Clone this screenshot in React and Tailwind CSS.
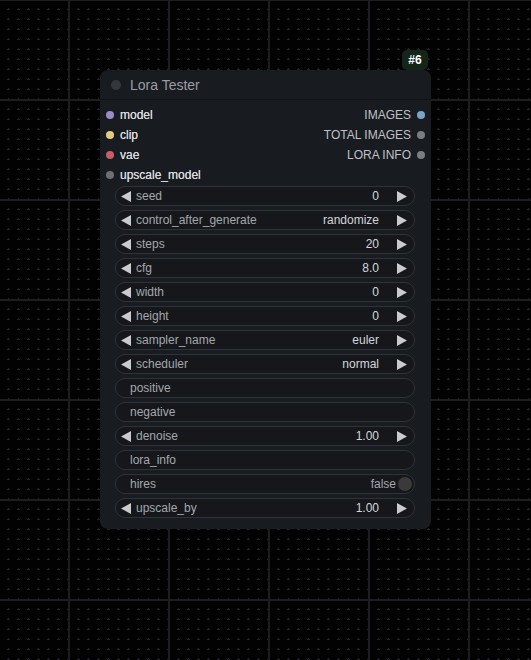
import React from "react";

const inputs = [
  { name: "model", color: "bg-[#9d8bc3]" },
  { name: "clip", color: "bg-[#e6cb7e]" },
  { name: "vae", color: "bg-[#c65e69]" },
  { name: "upscale_model", color: "bg-[#6c6e74]" },
];
const outputs = [
  { name: "IMAGES", color: "bg-[#7ea3c8]" },
  { name: "TOTAL IMAGES", color: "bg-[#7b7d83]" },
  { name: "LORA INFO", color: "bg-[#7b7d83]" },
];

const widgets = [
  { t: "num", label: "seed", value: "0" },
  { t: "num", label: "control_after_generate", value: "randomize" },
  { t: "num", label: "steps", value: "20" },
  { t: "num", label: "cfg", value: "8.0" },
  { t: "num", label: "width", value: "0" },
  { t: "num", label: "height", value: "0" },
  { t: "num", label: "sampler_name", value: "euler" },
  { t: "num", label: "scheduler", value: "normal" },
  { t: "text", label: "positive" },
  { t: "text", label: "negative" },
  { t: "num", label: "denoise", value: "1.00" },
  { t: "text", label: "lora_info" },
  { t: "toggle", label: "hires", value: "false" },
  { t: "num", label: "upscale_by", value: "1.00" },
];

function Background() {
  return (
    <svg className="absolute inset-0" width="531" height="660">
      <defs>
        <pattern id="dots" x="0" y="0" width="10" height="10" patternUnits="userSpaceOnUse">
          <rect x="7" y="9" width="3" height="1" fill="#212328" />
          <rect x="8" y="8" width="1" height="3" fill="#212328" />
        </pattern>
        <pattern id="grid" x="68" y="-1" width="100" height="100" patternUnits="userSpaceOnUse">
          <rect x="0" y="0" width="2" height="100" fill="#1c1e22" />
          <rect x="0" y="0" width="100" height="2" fill="#1c1e22" />
        </pattern>
      </defs>
      <rect width="531" height="660" fill="#020203" />
      <rect width="531" height="660" fill="url(#dots)" />
      <rect width="531" height="660" fill="url(#grid)" />
    </svg>
  );
}

function LeftArrow() {
  return (
    <svg width="10" height="11" viewBox="0 0 10 11" className="ml-[5px] mr-[5px] shrink-0">
      <polygon points="0,5.5 10,0 10,11" fill="#c9cbce" />
    </svg>
  );
}
function RightArrow() {
  return (
    <svg width="10" height="11" viewBox="0 0 10 11" className="ml-[18px] mr-[7px] shrink-0">
      <polygon points="10,5.5 0,0 0,11" fill="#c9cbce" />
    </svg>
  );
}

function Widget({ w }) {
  return (
    <div className="h-[20px] rounded-full border border-[#2f3238] bg-[#15171b] flex items-center text-[12px] leading-none">
      {w.t === "num" && (
        <>
          <LeftArrow />
          <span className="text-[#a4a7ac]">{w.label}</span>
          <span className="ml-auto text-[#d4d6d9]">{w.value}</span>
          <RightArrow />
        </>
      )}
      {w.t === "text" && <span className="pl-[14px] text-[#a4a7ac]">{w.label}</span>}
      {w.t === "toggle" && (
        <>
          <span className="pl-[14px] text-[#a4a7ac]">{w.label}</span>
          <span className="ml-auto text-[#a4a7ac]">{w.value}</span>
          <span className="ml-[2px] mr-[2px] w-[14px] h-[14px] rounded-full bg-[#3a3a3a]" />
        </>
      )}
    </div>
  );
}

export default function App() {
  return (
    <div
      className="relative w-[531px] h-[660px] overflow-hidden"
      style={{ fontFamily: '"Liberation Sans", Arial, sans-serif' }}
    >
      <Background />
      <div className="absolute left-[402px] top-[50px] w-[26px] h-[20px] rounded-[5px] bg-[#14251a] flex items-center justify-center text-white text-[12px] font-bold leading-none">
        #6
      </div>
      <div className="absolute left-[100px] top-[70px] w-[331px] h-[459px] rounded-[8px] bg-[#181b20] flex flex-col">
        <div className="h-[30px] flex items-center border-b border-[#101216] shrink-0">
          <span className="ml-[11px] w-[10px] h-[10px] rounded-full bg-[#34373d]" />
          <span className="ml-[9px] text-[14px] text-[#9a9da2] leading-none">Lora Tester</span>
        </div>
        <div className="pt-[5px] flex justify-between">
          <div className="flex flex-col">
            {inputs.map((s) => (
              <div key={s.name} className="h-[20px] flex items-center pl-[6px]">
                <span className={`w-[8px] h-[8px] rounded-full ${s.color}`} />
                <span className="ml-[6px] text-[12px] text-[#d8dadd] leading-none [text-shadow:0_0_0.4px_#d8dadd]">{s.name}</span>
              </div>
            ))}
          </div>
          <div className="flex flex-col items-end">
            {outputs.map((s) => (
              <div key={s.name} className="h-[20px] flex items-center pr-[6px]">
                <span className="mr-[6px] text-[12px] text-[#bfc1c5] leading-none">{s.name}</span>
                <span className={`w-[8px] h-[8px] rounded-full ${s.color}`} />
              </div>
            ))}
          </div>
        </div>
        <div className="mt-[1px] ml-[15px] w-[300px] flex flex-col gap-[4px]">
          {widgets.map((w) => (
            <Widget key={w.label} w={w} />
          ))}
        </div>
      </div>
    </div>
  );
}
